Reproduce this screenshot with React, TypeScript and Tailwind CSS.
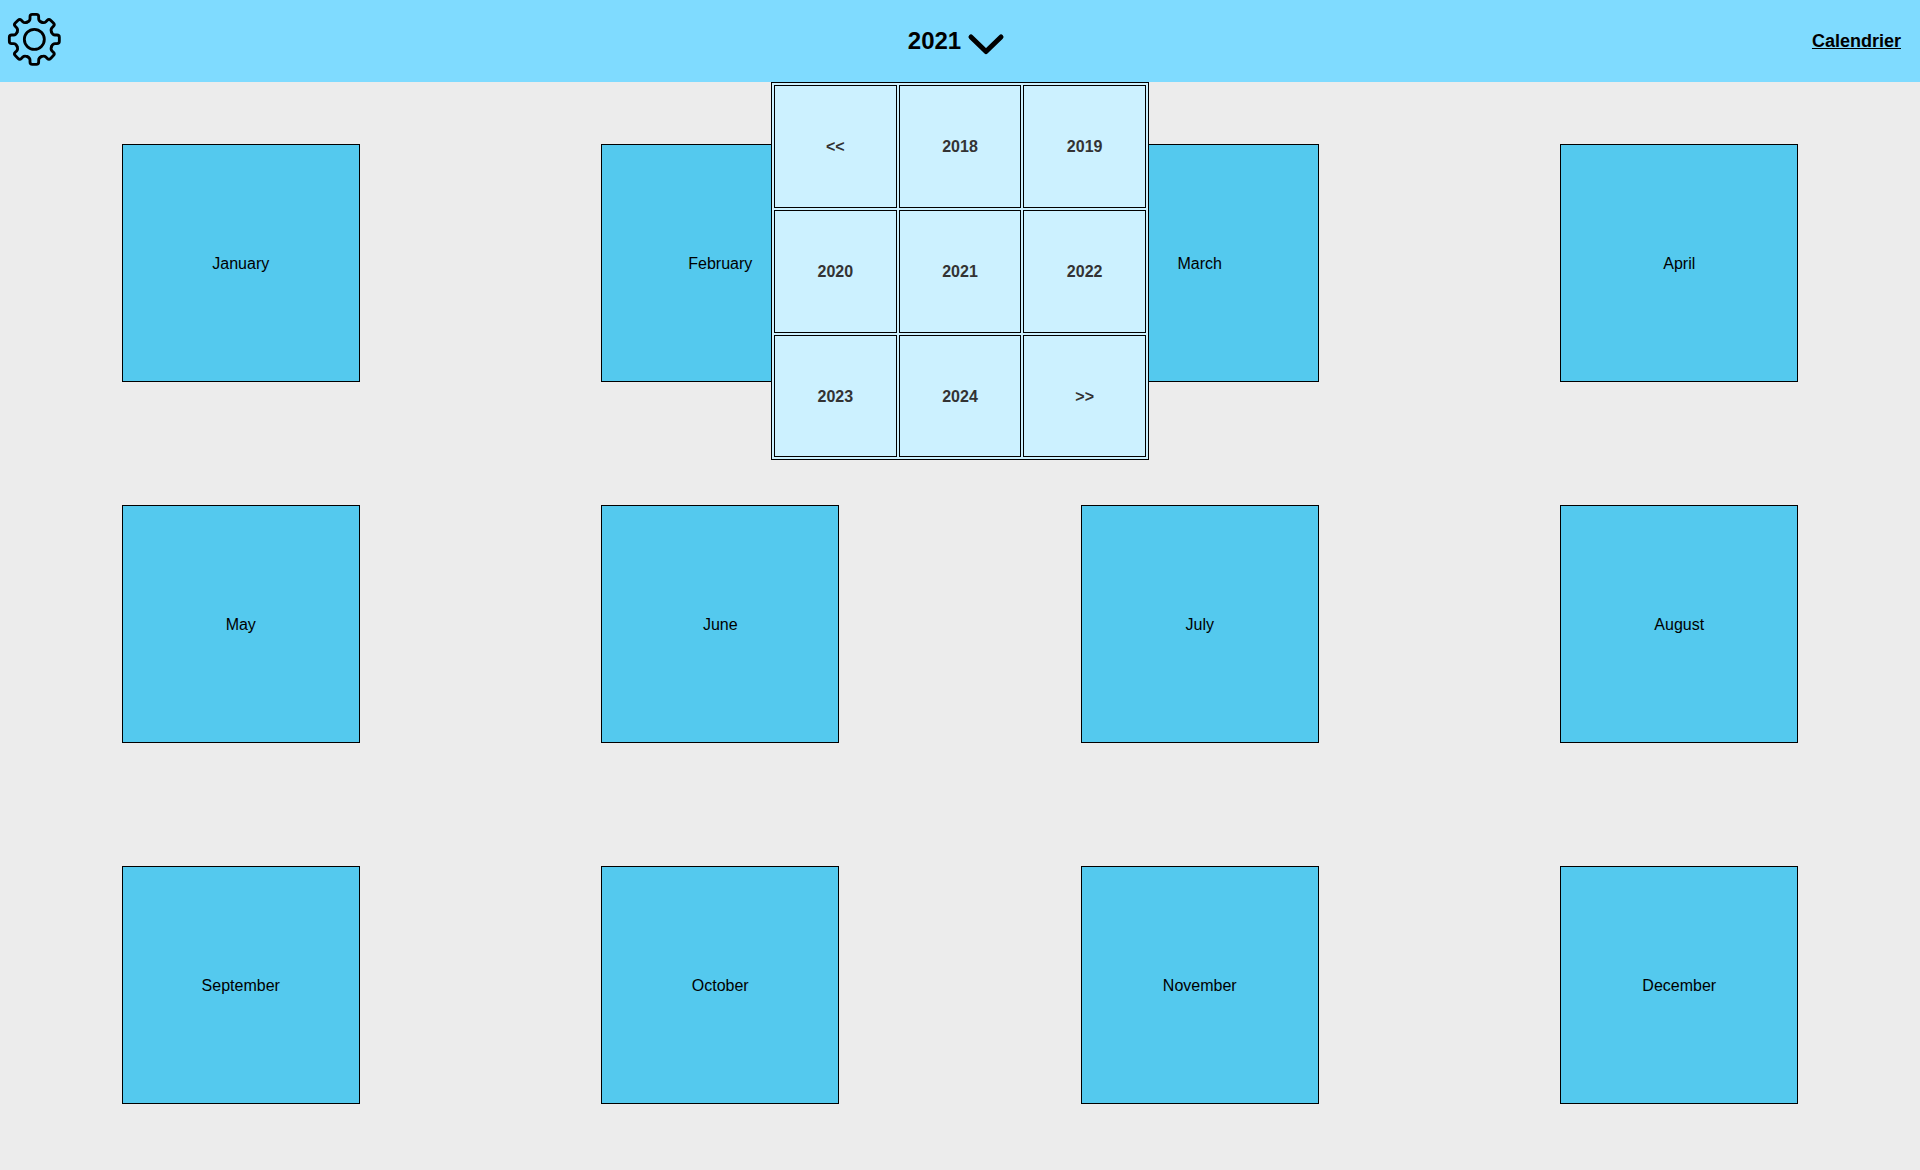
import { useState } from "react";

const MONTHS = [
  "January",
  "February",
  "March",
  "April",
  "May",
  "June",
  "July",
  "August",
  "September",
  "October",
  "November",
  "December",
];

const TEETH = [0, 45, 90, 135, 180, 225, 270, 315];

function GearIcon() {
  return (
    <svg
      className="size-[54px]"
      viewBox="-82 -82 162 162"
      fill="none"
      stroke="currentColor"
      strokeWidth="8.5"
      strokeLinecap="round"
      strokeLinejoin="round"
      aria-hidden="true"
    >
      <circle r="30" />
      {TEETH.map((angle) => (
        <path
          key={angle}
          transform={`rotate(${angle})`}
          d="M-21.4-51.7C-16.5-53.7-13-58-13-62V-68Q-13-75-6-75H6Q13-75 13-68V-62C13-58 16.5-53.7 21.4-51.7"
        />
      ))}
    </svg>
  );
}

function ChevronIcon() {
  return (
    <svg
      className="mt-0.5 mr-1.5 h-6 w-10"
      viewBox="0 0 40 24"
      fill="none"
      stroke="currentColor"
      strokeWidth="5"
      strokeLinecap="round"
      strokeLinejoin="round"
      aria-hidden="true"
    >
      <path d="M5 5L20 19.5L35 5" />
    </svg>
  );
}

interface YearPickerProps {
  firstYear: number;
  onShift: (amount: number) => void;
  onSelect: (year: number) => void;
}

function YearPicker({ firstYear, onShift, onSelect }: YearPickerProps) {
  const years = Array.from({ length: 7 }, (_, i) => firstYear + i);
  const cells = [
    { label: "<<", action: () => onShift(-7) },
    ...years.map((year) => ({ label: String(year), action: () => onSelect(year) })),
    { label: ">>", action: () => onShift(7) },
  ];
  return (
    <div className="absolute top-full left-1/2 z-10 grid w-[378px] -translate-x-1/2 grid-cols-3 grid-rows-[123px_123px_122px] gap-0.5 border border-black bg-[#ccf1ff] p-0.5">
      {cells.map((cell) => (
        <button
          key={cell.label}
          type="button"
          onClick={cell.action}
          className="cursor-pointer border border-black pt-px font-bold text-[#333333]"
        >
          {cell.label}
        </button>
      ))}
    </div>
  );
}

export default function App() {
  const [year, setYear] = useState(2021);
  const [firstYear, setFirstYear] = useState(2018);
  const [open, setOpen] = useState(true);

  return (
    <div className="min-h-screen bg-[#ececec] font-['Liberation_Sans',Arial,sans-serif] text-base text-black">
      <header className="relative grid h-[82px] grid-cols-[1fr_auto_1fr] items-center bg-[#7fdbff]">
        <button
          type="button"
          aria-label="Settings"
          className="mt-3 ml-[7px] cursor-pointer self-start justify-self-start"
        >
          <GearIcon />
        </button>
        <button
          type="button"
          aria-expanded={open}
          onClick={() => setOpen(!open)}
          className="flex cursor-pointer items-center gap-[5px] pt-1 text-2xl font-bold"
        >
          <span className="pb-1">{year}</span>
          <ChevronIcon />
        </button>
        <a href="#calendrier" className="mr-[19px] justify-self-end text-lg font-bold underline">
          Calendrier
        </a>
        {open && (
          <YearPicker
            firstYear={firstYear}
            onShift={(amount) => setFirstYear(firstYear + amount)}
            onSelect={setYear}
          />
        )}
      </header>
      <main className="grid grid-cols-4 justify-items-center gap-y-[123px] px-px pt-[62px] pb-[61px]">
        {MONTHS.map((month) => (
          <button
            key={month}
            type="button"
            className="size-[238px] cursor-pointer border border-black bg-[#54c9ee] pt-0.5"
          >
            {month}
          </button>
        ))}
      </main>
    </div>
  );
}
